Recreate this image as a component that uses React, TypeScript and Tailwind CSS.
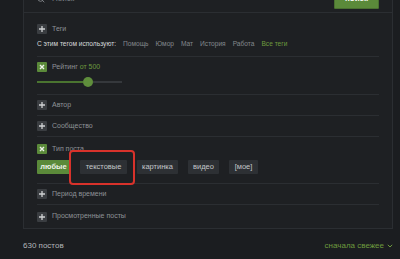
import { Search } from "lucide-react";

const font = { fontFamily: '"Liberation Sans", Arial, sans-serif' };

function PlusBox() {
  return (
    <div className="w-[10px] h-[10px] rounded-[1px] bg-[#3a3d41] flex items-center justify-center">
      <svg width="8" height="8" viewBox="0 0 8 8">
        <path d="M4 1v6M1 4h6" stroke="#cfd1d3" strokeWidth="1.3" />
      </svg>
    </div>
  );
}

function CheckBox() {
  return (
    <div className="w-[10px] h-[10px] rounded-[1px] bg-[#5b8a3a] flex items-center justify-center">
      <svg width="6" height="6" viewBox="0 0 6 6">
        <path d="M1 1l4 4M5 1l-4 4" stroke="#eef3ea" strokeWidth="1.4" />
      </svg>
    </div>
  );
}

function Collapsed({ label, last }: { label: string; last?: boolean }) {
  return (
    <div className={`flex items-center gap-[5px] ${last ? "h-[23px]" : "h-[21px] border-b border-[#2b2e32]"}`}>
      <PlusBox />
      <span className="text-[7px] text-[#8e9297]">{label}</span>
    </div>
  );
}

const tags = ["Помощь", "Юмор", "Мат", "История", "Работа"];

const types = [
  { label: "любые", w: "w-[33px]", active: true },
  { label: "текстовые", w: "w-[47px]" },
  { label: "картинка", w: "w-[41px]" },
  { label: "видео", w: "w-[31px]" },
  { label: "[мое]", w: "w-[29px]" },
];

export default function App() {
  return (
    <div className="w-[400px] h-[259px] overflow-hidden bg-[#1b1d20] relative" style={font}>
      <div className="ml-[23px] mr-[7px] -mt-[11px] bg-[#1e2023] border-x border-b border-[#2b2e32]">
        {/* search */}
        <div className="h-[24px] px-[13px] pb-[4px] flex items-center border-b border-[#2b2e32]">
          <Search size={8} strokeWidth={2.5} className="text-[#8a8e93]" />
          <span className="ml-[7px] text-[8px] text-[#7d8186]">Поиск</span>
          <div className="ml-auto w-[45px] h-[20px] bg-[#5b8a3a] border border-[#4a7030] rounded-[1px] flex items-center justify-center text-[8px] font-bold text-white">
            поиск
          </div>
        </div>

        <div className="px-[13px]">
          {/* tags */}
          <div className="pt-[11px] pb-[6px] border-b border-[#2b2e32]">
            <div className="h-[10px] flex items-center gap-[5px]">
              <PlusBox />
              <span className="text-[7px] text-[#8e9297]">Теги</span>
            </div>
            <div className="mt-[4px] h-[12px] flex items-center gap-[7px] text-[6.6px]">
              <span className="text-[#d6d8da]">С этим тегом используют:</span>
              {tags.map((t) => (
                <span key={t} className="text-[#84888d]">{t}</span>
              ))}
              <span className="text-[#6d9b3e]">Все теги</span>
            </div>
          </div>

          {/* rating */}
          <div className="pt-[5px] pb-[6px] border-b border-[#2b2e32]">
            <div className="h-[10px] flex items-center gap-[5px]">
              <CheckBox />
              <span className="text-[7px] text-[#8e9297]">
                Рейтинг <span className="text-[#6d9b3e]">от 500</span>
              </span>
            </div>
            <div className="mt-[4px] h-[12px] w-[85px] flex items-center">
              <div className="h-[2px] w-[46px] bg-[#4a7430]" />
              <div className="w-[10px] h-[10px] rounded-full bg-[#5f8e3c]" />
              <div className="h-[2px] flex-1 bg-[#35383c]" />
            </div>
          </div>

          <Collapsed label="Автор" />
          <Collapsed label="Сообщество" />

          {/* post type */}
          <div className="pt-[7px] pb-[9px] border-b border-[#2b2e32]">
            <div className="h-[10px] flex items-center gap-[5px]">
              <CheckBox />
              <span className="text-[7px] text-[#8e9297]">Тип поста</span>
            </div>
            <div className="mt-[6px] flex gap-[10px]">
              {types.map((t) => (
                <div
                  key={t.label}
                  className={`${t.w} h-[14px] rounded-[1px] flex items-center justify-center text-[7.5px] ${
                    t.active ? "bg-[#5b8a3a] text-[#eef2ea] font-bold" : "bg-[#2d3034] text-[#c3c6c9]"
                  }`}
                >
                  {t.label}
                </div>
              ))}
            </div>
          </div>

          <Collapsed label="Период времени" />
          <Collapsed label="Просмотренные посты" last />
        </div>
      </div>

      <div className="mt-[10px] h-[14px] pl-[23px] pr-[7px] flex items-center justify-between text-[8px]">
        <span className="text-[#b3b6b9]">630 постов</span>
        <span className="text-[#6d9b3e] flex items-center gap-[3px]">
          сначала свежее
          <svg width="6" height="4" viewBox="0 0 6 4">
            <path d="M0.8 0.8L3 3L5.2 0.8" stroke="#6d9b3e" strokeWidth="1" fill="none" />
          </svg>
        </span>
      </div>

      {/* annotation */}
      <div className="absolute left-[69px] top-[150px] w-[66px] h-[35px] border-2 border-[#d8322b] rounded-[4px]" />
    </div>
  );
}
